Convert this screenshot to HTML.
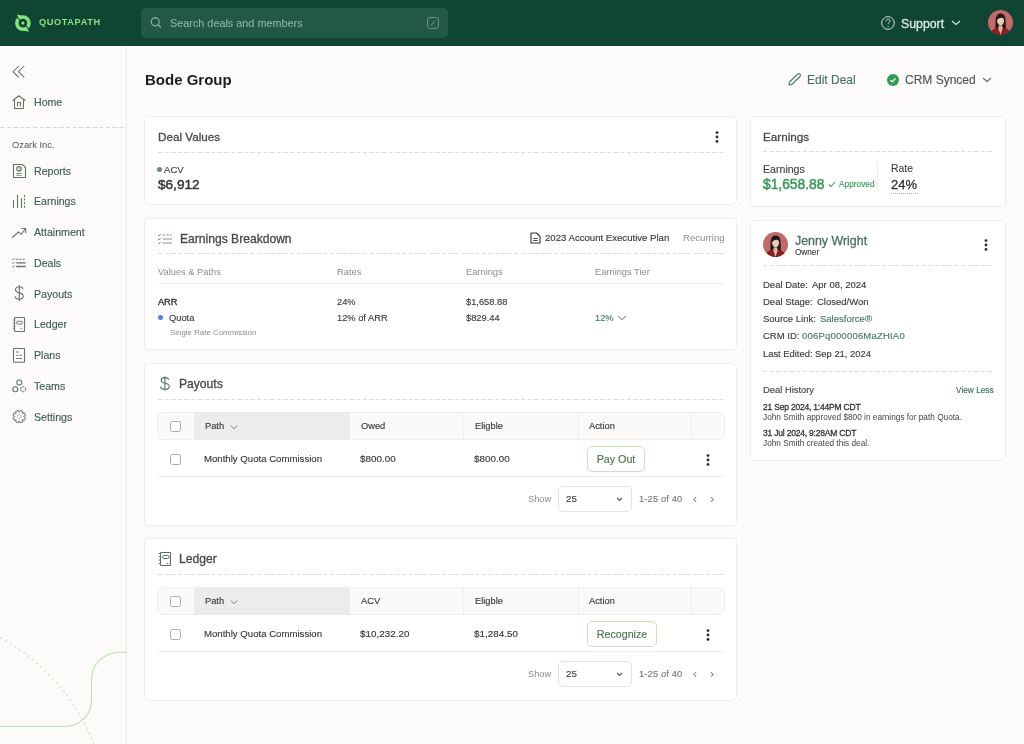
<!DOCTYPE html>
<html><head><meta charset="utf-8"><style>
html,body{margin:0;padding:0}
body{width:1024px;height:744px;position:relative;overflow:hidden;background:#fcfbf9;font-family:"Liberation Sans",sans-serif}
.t{position:absolute;white-space:nowrap;line-height:1;will-change:transform}
svg{display:block}
</style></head><body>
<div style="position:absolute;left:0px;top:0px;width:1024px;height:46px;background:#0f4532"></div>
<div style="position:absolute;left:141px;top:8px;width:307px;height:30px;background:#235845;border-radius:5px"></div>
<svg style="position:absolute;left:12px;top:12px" width="22" height="22" viewBox="0 0 22 22" fill="none"><circle cx="10.9" cy="11.1" r="6.1" stroke="#86e27a" stroke-width="3.5"/>
<circle cx="10.9" cy="11.1" r="1.6" fill="#92e884"/>
<path d="M3.5 3.2 L8.6 8.8 M18.3 19 L13.2 13.4" stroke="#0f4532" stroke-width="1.1"/>
<path d="M4.8 2.4 L9.5 3.4 L8.6 7.4 L6.2 5.2Z" fill="#86e27a"/>
<path d="M17 19.8 L12.3 18.8 L13.2 14.8 L15.6 17Z" fill="#86e27a"/></svg>
<div class="t" style="left:39.00px;top:18.21px;font-size:9.20px;color:#8ae27e;font-weight:700;letter-spacing:0.62px">QUOTAPATH</div>
<svg style="position:absolute;left:150px;top:17px" width="12" height="12" viewBox="0 0 12 12" fill="none"><circle cx="5.2" cy="4.8" r="4" stroke="#8fb8a6" stroke-width="1.15"/><path d="M8.1 7.7 L10.8 10.7" stroke="#8fb8a6" stroke-width="1.2"/></svg>
<div class="t" style="left:170.30px;top:17.80px;font-size:10.85px;color:#8ab19f;font-weight:400;-webkit-text-stroke:0.15px currentColor">Search deals and members</div>
<svg style="position:absolute;left:427px;top:17px" width="12" height="12" viewBox="0 0 12 12" fill="none"><rect x="0.6" y="0.6" width="10.8" height="10.8" rx="2.2" stroke="#6f9a87" stroke-width="1"/><path d="M4 8.5 L8 3.5" stroke="#6f9a87" stroke-width="1"/></svg>
<svg style="position:absolute;left:881px;top:16px" width="14" height="14" viewBox="0 0 14 14" fill="none"><circle cx="7" cy="7" r="6.3" stroke="#d9e6df" stroke-width="1"/><path d="M5 5.3 C5 3.9 6 3.2 7 3.2 C8.1 3.2 9 4 9 5.1 C9 6.4 7.1 6.6 7.1 8.2" stroke="#d9e6df" stroke-width="1"/><circle cx="7.1" cy="10.3" r="0.6" fill="#d9e6df"/></svg>
<div class="t" style="left:900.50px;top:18.19px;font-size:12.30px;color:#d8eadf;font-weight:400;-webkit-text-stroke:0.3px #d8eadf">Support</div>
<svg style="position:absolute;left:951px;top:20px" width="10" height="6" viewBox="0 0 10 6" fill="none"><path d="M1 1 L5 4.5 L9 1" stroke="#d9e6df" stroke-width="1.1"/></svg>
<svg style="position:absolute;left:988px;top:10px" width="25" height="25" viewBox="0 0 25 25" fill="none"><defs><clipPath id="c1"><circle cx="12.5" cy="12.5" r="12.5"/></clipPath></defs>
<g clip-path="url(#c1)"><rect width="25" height="25" fill="#c06a6c"/>
<path d="M7.3 25 L7.6 10.5 C7.8 5.5 10 3.6 12.6 3.6 C15.4 3.6 17.4 5.6 17.6 10.5 L18 25Z" fill="#251819"/>
<path d="M2 25 C3 20 6 18.5 9.5 18 L12.5 25Z M23 25 C22 20 19 18.5 15.5 18 L12.5 25Z" fill="#8f1d26"/>
<path d="M10.8 15.5 H14.2 L14.8 18.5 L12.5 25 L10.2 18.5Z" fill="#e3b3a0"/>
<ellipse cx="12.6" cy="10.8" rx="3.5" ry="4.7" fill="#eccbb8"/>
<path d="M9 10 C9.2 6.2 11 5 12.6 5 C14.5 5 16.2 6.4 16.3 9.5 C15 7.3 12 6.8 9 10Z" fill="#251819"/>
</g></svg>
<div style="position:absolute;left:126px;top:46px;width:1px;height:698px;background:#eeebe6"></div>
<div class="t" style="left:33.50px;top:97.12px;font-size:10.60px;color:#3d5f4f;font-weight:400;-webkit-text-stroke:0.15px currentColor">Home</div>
<div style="position:absolute;left:0px;top:127px;width:126px;height:1px;background:repeating-linear-gradient(90deg,#d9d7d2 0 4.4px,transparent 4.4px 6.6px)"></div>
<div class="t" style="left:12.00px;top:140.76px;font-size:9.30px;color:#555;font-weight:400;">Ozark Inc.</div>
<div class="t" style="left:33.50px;top:165.62px;font-size:10.60px;color:#3d5f4f;font-weight:400;-webkit-text-stroke:0.15px currentColor">Reports</div>
<div class="t" style="left:33.50px;top:196.37px;font-size:10.60px;color:#3d5f4f;font-weight:400;-webkit-text-stroke:0.15px currentColor">Earnings</div>
<div class="t" style="left:33.50px;top:227.12px;font-size:10.60px;color:#3d5f4f;font-weight:400;-webkit-text-stroke:0.15px currentColor">Attainment</div>
<div class="t" style="left:33.50px;top:257.87px;font-size:10.60px;color:#3d5f4f;font-weight:400;-webkit-text-stroke:0.15px currentColor">Deals</div>
<div class="t" style="left:33.50px;top:288.62px;font-size:10.60px;color:#3d5f4f;font-weight:400;-webkit-text-stroke:0.15px currentColor">Payouts</div>
<div class="t" style="left:33.50px;top:319.37px;font-size:10.60px;color:#3d5f4f;font-weight:400;-webkit-text-stroke:0.15px currentColor">Ledger</div>
<div class="t" style="left:33.50px;top:350.12px;font-size:10.60px;color:#3d5f4f;font-weight:400;-webkit-text-stroke:0.15px currentColor">Plans</div>
<div class="t" style="left:33.50px;top:380.87px;font-size:10.60px;color:#3d5f4f;font-weight:400;-webkit-text-stroke:0.15px currentColor">Teams</div>
<div class="t" style="left:33.50px;top:411.62px;font-size:10.60px;color:#3d5f4f;font-weight:400;-webkit-text-stroke:0.15px currentColor">Settings</div>
<svg style="position:absolute;left:0px;top:620px" width="127" height="124" viewBox="0 0 127 124" fill="none"><path d="M0 106.5 H64 C80 106.5 91.5 95 91.5 80 V60 C91.5 44 104 32.3 120 32.3 H127" stroke="#b8e0ad" stroke-width="1.1"/><path d="M0 17.6 A206.6 206.6 0 0 1 93.9 124" stroke="#d3e2cc" stroke-width="1.2" stroke-dasharray="2.5 3"/></svg>
<svg style="position:absolute;left:0;top:0" width="126" height="744" viewBox="0 0 126 744" fill="none" stroke="#627569" stroke-width="1.1">
<path d="M18.8 66 L13 71.7 L18.8 77.4 M24.3 66 L18.5 71.7 L24.3 77.4" stroke-width="1.05"/>
<path d="M12.6 100.8 L18.9 95.8 L25.3 100.8"/>
<path d="M14.5 99.3 V108.5 H23.5 V99.3"/>
<path d="M17.5 106.5 V102.5 H20.5 V106.5"/>
<path d="M13.5 164.5 H22.5 L25.5 167.5 V177.5 H13.5Z"/>
<circle cx="19" cy="168.8" r="2.3"/>
<path d="M19 166.5 V168.8 L20.4 170" stroke-width="0.8"/>
<path d="M16.3 173.5 H21.7 M16.3 175.3 H21.7" stroke-width="0.8"/>
<path d="M13.5 200.3 V208 M17.5 195 V208 M21.5 198.2 V208"/>
<path d="M24.5 195 V208" stroke-dasharray="2 1.6"/>
<path d="M12.3 237.5 L18.5 232 L21.3 234.3 L25.7 228.5"/>
<path d="M21.3 228.5 H25.7 V233"/>
<path d="M12.3 259.3 L13.1 260 L14.8 258.3 M12.3 262.9 L13.1 263.6 L14.8 261.9 M12.3 266.5 L13.1 267.2 L14.8 265.5" stroke-width="0.9"/>
<path d="M16.2 259.3 H25.7" stroke-dasharray="2 1.2"/>
<path d="M16.2 262.9 H25.7 M16.2 266.5 H25.7" stroke-width="1.3"/>
<path d="M22.8 289.3 C22.8 287.5 21.3 286.8 19.3 286.8 C17.2 286.8 15.5 287.9 15.5 289.8 C15.5 291.8 17.3 292.5 19.3 292.9 C21.5 293.3 23.2 294 23.2 296.2 C23.2 298.2 21.5 299.2 19.3 299.2 C17 299.2 15.3 298.2 15.1 296.3 M19.3 285 V301"/>
<rect x="14.5" y="317.5" width="10" height="14" rx="0.8"/>
<rect x="16.8" y="321.3" width="5.4" height="2.8" rx="0.6" stroke-width="0.9"/>
<path d="M12.8 320 H15.2 M12.8 323 H15.2 M12.8 326 H15.2 M12.8 329 H15.2 M20.4 328.8 H22.4" stroke-width="0.8"/>
<rect x="13.5" y="348.5" width="11" height="13.8" rx="0.6"/>
<path d="M16 352 H19 M16 355.3 H18.3 M19.5 355.3 H22 M16 358.5 H22" stroke-width="0.9"/>
<circle cx="19.3" cy="382.5" r="2.5"/>
<circle cx="15.3" cy="389.2" r="2.5"/>
<circle cx="23.1" cy="389.2" r="2.5" stroke-dasharray="1.7 1"/>
<path d="M23.74 416.88 L25.55 417.70 L24.49 420.28 L22.63 419.58 L22.23 419.98 L22.93 421.84 L20.35 422.90 L19.53 421.09 L18.97 421.09 L18.15 422.90 L15.57 421.84 L16.27 419.98 L15.87 419.58 L14.01 420.28 L12.95 417.70 L14.76 416.88 L14.76 416.32 L12.95 415.50 L14.01 412.92 L15.87 413.62 L16.27 413.22 L15.57 411.36 L18.15 410.30 L18.97 412.11 L19.53 412.11 L20.35 410.30 L22.93 411.36 L22.23 413.22 L22.63 413.62 L24.49 412.92 L25.55 415.50 L23.74 416.32Z" stroke-linejoin="round" stroke-width="1"/>
<circle cx="19.25" cy="416.6" r="1.9" stroke-width="0.8" stroke-dasharray="1 0.9"/>
</svg>
<div class="t" style="left:145.00px;top:71.87px;font-size:15.00px;color:#1d1d1d;font-weight:700;">Bode Group</div>
<svg style="position:absolute;left:787px;top:72px" width="15" height="15" viewBox="0 0 15 15" fill="none"><path d="M2 13 L2.6 10 L10.5 2.1 C11.2 1.4 12.2 1.4 12.9 2.1 C13.6 2.8 13.6 3.8 12.9 4.5 L5 12.4Z" stroke="#4f7a66" stroke-width="1.2" stroke-linejoin="round"/></svg>
<div class="t" style="left:807.00px;top:73.94px;font-size:12.00px;color:#4c7261;font-weight:400;-webkit-text-stroke:0.15px currentColor">Edit Deal</div>
<svg style="position:absolute;left:887px;top:74px" width="12" height="12" viewBox="0 0 12 12" fill="none"><circle cx="6" cy="6" r="6" fill="#2f9d55"/><path d="M3.4 6.1 L5.2 7.8 L8.6 4.4" stroke="#fff" stroke-width="1.3"/></svg>
<div class="t" style="left:905.00px;top:73.94px;font-size:12.00px;color:#555;font-weight:400;-webkit-text-stroke:0.15px currentColor">CRM Synced</div>
<svg style="position:absolute;left:982px;top:77px" width="10" height="6" viewBox="0 0 10 6" fill="none"><path d="M1 1 L5 4.5 L9 1" stroke="#666" stroke-width="1.1"/></svg>
<div style="position:absolute;left:144px;top:116px;width:593px;height:89px;background:#fff;border:1px solid #efedea;border-radius:5px;box-sizing:border-box"></div>
<div class="t" style="left:157.60px;top:130.98px;font-size:11.70px;color:#484848;font-weight:400;-webkit-text-stroke:0.3px currentColor">Deal Values</div>
<svg style="position:absolute;left:713.80px;top:130.00px" width="6" height="14" viewBox="0 0 6 14"><circle cx="3" cy="2.55" r="1.4" fill="#2a2a2a"/><circle cx="3" cy="7" r="1.4" fill="#2a2a2a"/><circle cx="3" cy="11.45" r="1.4" fill="#2a2a2a"/></svg>
<div style="position:absolute;left:158px;top:152px;width:567px;height:1px;background:repeating-linear-gradient(90deg,#dcdcd8 0 4.4px,transparent 4.4px 6.6px)"></div>
<div style="position:absolute;left:157.2px;top:167.4px;width:5px;height:5px;border-radius:50%;background:#5c9b5f"></div>
<div class="t" style="left:164.00px;top:165.31px;font-size:9.60px;color:#444;font-weight:400;-webkit-text-stroke:0.15px currentColor">ACV</div>
<div class="t" style="left:157.80px;top:178.06px;font-size:13.60px;color:#363636;font-weight:400;-webkit-text-stroke:0.45px #363636">$6,912</div>
<div style="position:absolute;left:144px;top:218px;width:593px;height:132px;background:#fff;border:1px solid #efedea;border-radius:5px;box-sizing:border-box"></div>
<svg style="position:absolute;left:157px;top:232px" width="16" height="13" viewBox="0 0 16 13" fill="none"><path d="M5.5 3 H15" stroke="#7f9c8e" stroke-width="1.1" stroke-dasharray="2.6 1.2"/><path d="M5.5 7 H15 M5.5 11 H15" stroke="#7f9c8e" stroke-width="1.1"/><path d="M1 3 L1.9 3.9 L3.6 2 M1 7 L1.9 7.9 L3.6 6 M1 11 L1.9 11.9 L3.6 10" stroke="#5f7a6c" stroke-width="0.9"/></svg>
<div class="t" style="left:179.80px;top:232.99px;font-size:12.10px;color:#484848;font-weight:400;-webkit-text-stroke:0.3px currentColor">Earnings Breakdown</div>
<svg style="position:absolute;left:530px;top:232px" width="11" height="12" viewBox="0 0 11 12" fill="none"><path d="M1 1 H6.5 L10 4.5 V11 H1Z" stroke="#333" stroke-width="1.1" stroke-linejoin="round"/><path d="M3.3 6.5 H7.7 M3.3 8.5 H7.7" stroke="#333" stroke-width="0.9"/></svg>
<div class="t" style="left:544.70px;top:233.11px;font-size:9.60px;color:#3a3a3a;font-weight:400;-webkit-text-stroke:0.15px currentColor">2023 Account Executive Plan</div>
<div class="t" style="left:682.80px;top:233.11px;font-size:9.60px;color:#8a8a8a;font-weight:400;">Recurring</div>
<div style="position:absolute;left:158px;top:253px;width:567px;height:1px;background:repeating-linear-gradient(90deg,#dcdcd8 0 4.4px,transparent 4.4px 6.6px)"></div>
<div class="t" style="left:158.00px;top:267.86px;font-size:9.30px;color:#8c8c8c;font-weight:400;">Values &amp; Paths</div>
<div class="t" style="left:337.00px;top:267.86px;font-size:9.30px;color:#8c8c8c;font-weight:400;">Rates</div>
<div class="t" style="left:466.00px;top:267.86px;font-size:9.30px;color:#8c8c8c;font-weight:400;">Earnings</div>
<div class="t" style="left:595.20px;top:267.86px;font-size:9.30px;color:#8c8c8c;font-weight:400;">Earnings Tier</div>
<div style="position:absolute;left:158px;top:283px;width:567px;height:1px;background:#f1f0ed"></div>
<div class="t" style="left:158.00px;top:297.66px;font-size:9.30px;color:#333;font-weight:400;-webkit-text-stroke:0.3px #333;letter-spacing:-0.1px">ARR</div>
<div class="t" style="left:337.00px;top:297.66px;font-size:9.30px;color:#3d3d3d;font-weight:400;-webkit-text-stroke:0.15px currentColor">24%</div>
<div class="t" style="left:466.00px;top:297.66px;font-size:9.30px;color:#3d3d3d;font-weight:400;-webkit-text-stroke:0.15px currentColor">$1,658.88</div>
<div style="position:absolute;left:157.6px;top:315px;width:5px;height:5px;border-radius:50%;background:#5a7fd6"></div>
<div class="t" style="left:169.00px;top:313.66px;font-size:9.30px;color:#3d3d3d;font-weight:400;-webkit-text-stroke:0.15px currentColor">Quota</div>
<div class="t" style="left:337.00px;top:313.66px;font-size:9.30px;color:#3d3d3d;font-weight:400;-webkit-text-stroke:0.15px currentColor">12% of ARR</div>
<div class="t" style="left:466.00px;top:313.66px;font-size:9.30px;color:#3d3d3d;font-weight:400;-webkit-text-stroke:0.15px currentColor">$829.44</div>
<div class="t" style="left:595.20px;top:313.66px;font-size:9.30px;color:#4f7a66;font-weight:400;-webkit-text-stroke:0.15px currentColor">12%</div>
<svg style="position:absolute;left:617px;top:315px" width="10" height="6" viewBox="0 0 10 6" fill="none"><path d="M1 1 L5 4.5 L9 1" stroke="#666" stroke-width="1"/></svg>
<div class="t" style="left:170.40px;top:328.94px;font-size:7.90px;color:#8c8c8c;font-weight:400;">Single Rate Commission</div>
<div style="position:absolute;left:144px;top:363px;width:593px;height:163px;background:#fff;border:1px solid #efedea;border-radius:5px;box-sizing:border-box"></div>
<svg style="position:absolute;left:157px;top:375px" width="16" height="17" viewBox="0 0 16 17" fill="none"><path d="M11.8 4.8 C11.6 3.3 10.2 2.6 8 2.6 C5.6 2.6 4.2 3.7 4.2 5.3 C4.2 7.3 6.2 7.8 8 8.2 C10.2 8.6 12.3 9.3 12.3 11.5 C12.3 13.4 10.5 14.3 8 14.3 C5.5 14.3 3.8 13.3 3.6 11.6 M7.9 1.3 V15.6" stroke="#557063" stroke-width="1.1"/></svg>
<div class="t" style="left:179.40px;top:378.09px;font-size:12.10px;color:#484848;font-weight:400;-webkit-text-stroke:0.3px currentColor">Payouts</div>
<div style="position:absolute;left:158px;top:399px;width:567px;height:1px;background:repeating-linear-gradient(90deg,#dcdcd8 0 4.4px,transparent 4.4px 6.6px)"></div>
<div style="position:absolute;left:157px;top:412px;width:568px;height:28px;background:#fbfaf9;border:1px solid #f1efec;border-radius:6px;box-sizing:border-box"></div>
<div style="position:absolute;left:194px;top:412px;width:156px;height:28px;background:#ececeb"></div>
<div style="position:absolute;left:463px;top:412px;width:1px;height:28px;background:#f0eeeb"></div>
<div style="position:absolute;left:577.5px;top:412px;width:1px;height:28px;background:#f0eeeb"></div>
<div style="position:absolute;left:690.5px;top:412px;width:1px;height:28px;background:#f0eeeb"></div>
<div style="position:absolute;left:170px;top:421px;width:11px;height:11px;border:1px solid #ababab;border-radius:2.5px;box-sizing:border-box;background:#fff"></div>
<div class="t" style="left:204.60px;top:422.46px;font-size:9.30px;color:#3a3a3a;font-weight:400;-webkit-text-stroke:0.15px currentColor">Path</div>
<svg style="position:absolute;left:230px;top:425px" width="8" height="5" viewBox="0 0 8 5" fill="none"><path d="M0.8 0.8 L4 3.6 L7.2 0.8" stroke="#777" stroke-width="0.9"/></svg>
<div class="t" style="left:361.00px;top:422.46px;font-size:9.30px;color:#3a3a3a;font-weight:400;-webkit-text-stroke:0.15px currentColor">Owed</div>
<div class="t" style="left:474.70px;top:422.46px;font-size:9.30px;color:#3a3a3a;font-weight:400;-webkit-text-stroke:0.15px currentColor">Eligble</div>
<div class="t" style="left:588.50px;top:422.46px;font-size:9.30px;color:#3a3a3a;font-weight:400;-webkit-text-stroke:0.15px currentColor">Action</div>
<div style="position:absolute;left:170px;top:454px;width:11px;height:11px;border:1px solid #ababab;border-radius:2.5px;box-sizing:border-box;background:#fff"></div>
<div class="t" style="left:203.50px;top:454.10px;font-size:9.62px;color:#3a3a3a;font-weight:400;-webkit-text-stroke:0.15px currentColor">Monthly Quota Commission</div>
<div class="t" style="left:360.00px;top:453.91px;font-size:9.80px;color:#3a3a3a;font-weight:400;letter-spacing:0.05px;-webkit-text-stroke:0.15px currentColor">$800.00</div>
<div class="t" style="left:474.00px;top:453.91px;font-size:9.80px;color:#3a3a3a;font-weight:400;letter-spacing:0.05px;-webkit-text-stroke:0.15px currentColor">$800.00</div>
<div style="position:absolute;left:587px;top:446px;width:57.5px;height:25.5px;border:1px solid #c5e6b9;border-radius:5px;box-sizing:border-box;background:#fff"></div>
<div class="t" style="left:615.75px;top:453.77px;font-size:10.70px;color:#4a7350;font-weight:400;transform:translateX(-50%);-webkit-text-stroke:0.15px currentColor">Pay Out</div>
<svg style="position:absolute;left:705.00px;top:452.50px" width="6" height="14" viewBox="0 0 6 14"><circle cx="3" cy="2.55" r="1.4" fill="#2a2a2a"/><circle cx="3" cy="7" r="1.4" fill="#2a2a2a"/><circle cx="3" cy="11.45" r="1.4" fill="#2a2a2a"/></svg>
<div style="position:absolute;left:157px;top:476px;width:568px;height:1px;background:#efeeeb"></div>
<div class="t" style="left:527.80px;top:495.46px;font-size:9.30px;color:#8c8c8c;font-weight:400;">Show</div>
<div style="position:absolute;left:558px;top:486px;width:74px;height:25.5px;border:1px solid #e4e2de;border-radius:5px;box-sizing:border-box;background:#fff"></div>
<div class="t" style="left:566.20px;top:494.21px;font-size:9.80px;color:#444;font-weight:400;-webkit-text-stroke:0.15px currentColor">25</div>
<svg style="position:absolute;left:616px;top:497px" width="7" height="5" viewBox="0 0 7 5" fill="none"><path d="M1 1 L3.5 3.5 L6 1" stroke="#555" stroke-width="1.1"/></svg>
<div class="t" style="left:639.00px;top:495.46px;font-size:9.30px;color:#7a7a7a;font-weight:400;letter-spacing:0.15px;-webkit-text-stroke:0.15px currentColor">1-25 of 40</div>
<svg style="position:absolute;left:692px;top:495.5px" width="6" height="7" viewBox="0 0 6 7" fill="none"><path d="M4 1.2 L1.9 3.5 L4 5.8" stroke="#555" stroke-width="1"/></svg>
<svg style="position:absolute;left:709px;top:495.5px" width="6" height="7" viewBox="0 0 6 7" fill="none"><path d="M2 1.2 L4.1 3.5 L2 5.8" stroke="#555" stroke-width="1"/></svg>
<div style="position:absolute;left:144px;top:538px;width:593px;height:163px;background:#fff;border:1px solid #efedea;border-radius:5px;box-sizing:border-box"></div>
<svg style="position:absolute;left:157px;top:550px" width="16" height="18" viewBox="0 0 16 18" fill="none" stroke="#587064"><rect x="3.5" y="2.5" width="10" height="13" rx="0.6" stroke-width="1.1"/><rect x="5.6" y="5.5" width="6.3" height="3" rx="1.2" stroke-width="1"/><path d="M1.6 3.5 H3.5 M1.6 6.5 H3.5 M1.6 10 H3.5 M1.6 13.5 H3.5 M9.6 13.6 H11.4" stroke-width="0.9"/></svg>
<div class="t" style="left:179.40px;top:553.09px;font-size:12.10px;color:#484848;font-weight:400;-webkit-text-stroke:0.3px currentColor">Ledger</div>
<div style="position:absolute;left:158px;top:574px;width:567px;height:1px;background:repeating-linear-gradient(90deg,#dcdcd8 0 4.4px,transparent 4.4px 6.6px)"></div>
<div style="position:absolute;left:157px;top:587px;width:568px;height:28px;background:#fbfaf9;border:1px solid #f1efec;border-radius:6px;box-sizing:border-box"></div>
<div style="position:absolute;left:194px;top:587px;width:156px;height:28px;background:#ececeb"></div>
<div style="position:absolute;left:463px;top:587px;width:1px;height:28px;background:#f0eeeb"></div>
<div style="position:absolute;left:577.5px;top:587px;width:1px;height:28px;background:#f0eeeb"></div>
<div style="position:absolute;left:690.5px;top:587px;width:1px;height:28px;background:#f0eeeb"></div>
<div style="position:absolute;left:170px;top:596px;width:11px;height:11px;border:1px solid #ababab;border-radius:2.5px;box-sizing:border-box;background:#fff"></div>
<div class="t" style="left:204.60px;top:597.46px;font-size:9.30px;color:#3a3a3a;font-weight:400;-webkit-text-stroke:0.15px currentColor">Path</div>
<svg style="position:absolute;left:230px;top:600px" width="8" height="5" viewBox="0 0 8 5" fill="none"><path d="M0.8 0.8 L4 3.6 L7.2 0.8" stroke="#777" stroke-width="0.9"/></svg>
<div class="t" style="left:361.00px;top:597.46px;font-size:9.30px;color:#3a3a3a;font-weight:400;-webkit-text-stroke:0.15px currentColor">ACV</div>
<div class="t" style="left:474.70px;top:597.46px;font-size:9.30px;color:#3a3a3a;font-weight:400;-webkit-text-stroke:0.15px currentColor">Eligble</div>
<div class="t" style="left:588.50px;top:597.46px;font-size:9.30px;color:#3a3a3a;font-weight:400;-webkit-text-stroke:0.15px currentColor">Action</div>
<div style="position:absolute;left:170px;top:629px;width:11px;height:11px;border:1px solid #ababab;border-radius:2.5px;box-sizing:border-box;background:#fff"></div>
<div class="t" style="left:203.50px;top:629.10px;font-size:9.62px;color:#3a3a3a;font-weight:400;-webkit-text-stroke:0.15px currentColor">Monthly Quota Commission</div>
<div class="t" style="left:360.00px;top:628.91px;font-size:9.80px;color:#3a3a3a;font-weight:400;letter-spacing:0.05px;-webkit-text-stroke:0.15px currentColor">$10,232.20</div>
<div class="t" style="left:474.00px;top:628.91px;font-size:9.80px;color:#3a3a3a;font-weight:400;letter-spacing:0.05px;-webkit-text-stroke:0.15px currentColor">$1,284.50</div>
<div style="position:absolute;left:587px;top:621px;width:70px;height:25.5px;border:1px solid #c5e6b9;border-radius:5px;box-sizing:border-box;background:#fff"></div>
<div class="t" style="left:622.00px;top:628.77px;font-size:10.70px;color:#4a7350;font-weight:400;transform:translateX(-50%);-webkit-text-stroke:0.15px currentColor">Recognize</div>
<svg style="position:absolute;left:705.00px;top:627.50px" width="6" height="14" viewBox="0 0 6 14"><circle cx="3" cy="2.55" r="1.4" fill="#2a2a2a"/><circle cx="3" cy="7" r="1.4" fill="#2a2a2a"/><circle cx="3" cy="11.45" r="1.4" fill="#2a2a2a"/></svg>
<div style="position:absolute;left:157px;top:651px;width:568px;height:1px;background:#efeeeb"></div>
<div class="t" style="left:527.80px;top:670.46px;font-size:9.30px;color:#8c8c8c;font-weight:400;">Show</div>
<div style="position:absolute;left:558px;top:661px;width:74px;height:25.5px;border:1px solid #e4e2de;border-radius:5px;box-sizing:border-box;background:#fff"></div>
<div class="t" style="left:566.20px;top:669.21px;font-size:9.80px;color:#444;font-weight:400;-webkit-text-stroke:0.15px currentColor">25</div>
<svg style="position:absolute;left:616px;top:672px" width="7" height="5" viewBox="0 0 7 5" fill="none"><path d="M1 1 L3.5 3.5 L6 1" stroke="#555" stroke-width="1.1"/></svg>
<div class="t" style="left:639.00px;top:670.46px;font-size:9.30px;color:#7a7a7a;font-weight:400;letter-spacing:0.15px;-webkit-text-stroke:0.15px currentColor">1-25 of 40</div>
<svg style="position:absolute;left:692px;top:670.5px" width="6" height="7" viewBox="0 0 6 7" fill="none"><path d="M4 1.2 L1.9 3.5 L4 5.8" stroke="#555" stroke-width="1"/></svg>
<svg style="position:absolute;left:709px;top:670.5px" width="6" height="7" viewBox="0 0 6 7" fill="none"><path d="M2 1.2 L4.1 3.5 L2 5.8" stroke="#555" stroke-width="1"/></svg>
<div style="position:absolute;left:750px;top:116px;width:256px;height:91px;background:#fff;border:1px solid #efedea;border-radius:5px;box-sizing:border-box"></div>
<div class="t" style="left:763.00px;top:130.98px;font-size:11.70px;color:#484848;font-weight:400;-webkit-text-stroke:0.3px currentColor">Earnings</div>
<div style="position:absolute;left:763px;top:151px;width:231px;height:1px;background:repeating-linear-gradient(90deg,#dcdcd8 0 4.4px,transparent 4.4px 6.6px)"></div>
<div class="t" style="left:763.00px;top:163.72px;font-size:10.60px;color:#444;font-weight:400;-webkit-text-stroke:0.15px currentColor">Earnings</div>
<div class="t" style="left:763.00px;top:177.56px;font-size:13.80px;color:#3a9a5b;font-weight:400;-webkit-text-stroke:0.5px #3a9a5b">$1,658.88</div>
<svg style="position:absolute;left:828px;top:180.5px" width="8" height="7" viewBox="0 0 8 7" fill="none"><path d="M1 3.5 L3 5.5 L7 1" stroke="#3a9a55" stroke-width="1.1"/></svg>
<div class="t" style="left:839.00px;top:180.15px;font-size:8.30px;color:#3a9a5b;font-weight:400;-webkit-text-stroke:0.15px currentColor">Approved</div>
<div style="position:absolute;left:877px;top:161px;width:1px;height:30px;background:#efeeeb"></div>
<div class="t" style="left:891.20px;top:163.82px;font-size:10.40px;color:#444;font-weight:400;-webkit-text-stroke:0.15px currentColor">Rate</div>
<div class="t" style="left:891.00px;top:177.75px;font-size:13.00px;color:#333;font-weight:400;-webkit-text-stroke:0.3px currentColor">24%</div>
<div style="position:absolute;left:891px;top:193px;width:28px;height:1px;background:repeating-linear-gradient(90deg,#aaa 0 1px,transparent 1px 2px)"></div>
<div style="position:absolute;left:750px;top:220px;width:256px;height:241px;background:#fff;border:1px solid #efedea;border-radius:5px;box-sizing:border-box"></div>
<svg style="position:absolute;left:763px;top:232px" width="25" height="25" viewBox="0 0 25 25" fill="none"><defs><clipPath id="c2"><circle cx="12.5" cy="12.5" r="12.5"/></clipPath></defs>
<g clip-path="url(#c2)"><rect width="25" height="25" fill="#c06a6c"/>
<path d="M7.3 25 L7.6 10.5 C7.8 5.5 10 3.6 12.6 3.6 C15.4 3.6 17.4 5.6 17.6 10.5 L18 25Z" fill="#251819"/>
<path d="M2 25 C3 20 6 18.5 9.5 18 L12.5 25Z M23 25 C22 20 19 18.5 15.5 18 L12.5 25Z" fill="#8f1d26"/>
<path d="M10.8 15.5 H14.2 L14.8 18.5 L12.5 25 L10.2 18.5Z" fill="#e3b3a0"/>
<ellipse cx="12.6" cy="10.8" rx="3.5" ry="4.7" fill="#eccbb8"/>
<path d="M9 10 C9.2 6.2 11 5 12.6 5 C14.5 5 16.2 6.4 16.3 9.5 C15 7.3 12 6.8 9 10Z" fill="#251819"/>
</g></svg>
<div class="t" style="left:795.00px;top:234.94px;font-size:12.40px;color:#4c7261;font-weight:400;-webkit-text-stroke:0.3px currentColor">Jenny Wright</div>
<div class="t" style="left:795.00px;top:249.19px;font-size:8.20px;color:#444;font-weight:400;-webkit-text-stroke:0.15px currentColor">Owner</div>
<svg style="position:absolute;left:982.50px;top:238.00px" width="6" height="14" viewBox="0 0 6 14"><circle cx="3" cy="2.55" r="1.4" fill="#2a2a2a"/><circle cx="3" cy="7" r="1.4" fill="#2a2a2a"/><circle cx="3" cy="11.45" r="1.4" fill="#2a2a2a"/></svg>
<div style="position:absolute;left:763px;top:265px;width:231px;height:1px;background:repeating-linear-gradient(90deg,#dcdcd8 0 4.4px,transparent 4.4px 6.6px)"></div>
<div class="t" style="left:763.00px;top:279.56px;font-size:9.50px;color:#3c3c3c;font-weight:400;-webkit-text-stroke:0.15px currentColor">Deal Date:</div>
<div class="t" style="left:811.80px;top:279.56px;font-size:9.50px;color:#3c3c3c;font-weight:400;-webkit-text-stroke:0.15px currentColor">Apr 08, 2024</div>
<div class="t" style="left:763.00px;top:297.06px;font-size:9.50px;color:#3c3c3c;font-weight:400;-webkit-text-stroke:0.15px currentColor">Deal Stage:</div>
<div class="t" style="left:816.70px;top:297.06px;font-size:9.50px;color:#3c3c3c;font-weight:400;-webkit-text-stroke:0.15px currentColor">Closed/Won</div>
<div class="t" style="left:763.00px;top:314.26px;font-size:9.50px;color:#3c3c3c;font-weight:400;-webkit-text-stroke:0.15px currentColor">Source Link:</div>
<div class="t" style="left:820.40px;top:314.26px;font-size:9.50px;color:#4b7a63;font-weight:400;-webkit-text-stroke:0.15px currentColor">Salesforce®</div>
<div class="t" style="left:763.00px;top:330.96px;font-size:9.50px;color:#3c3c3c;font-weight:400;-webkit-text-stroke:0.15px currentColor">CRM ID:</div>
<div class="t" style="left:801.60px;top:330.96px;font-size:9.50px;color:#4b7a63;font-weight:400;letter-spacing:0.2px;-webkit-text-stroke:0.15px currentColor">006Pq000006MaZHIA0</div>
<div class="t" style="left:763.00px;top:348.71px;font-size:9.40px;color:#3c3c3c;font-weight:400;-webkit-text-stroke:0.15px currentColor">Last Edited: Sep 21, 2024</div>
<div style="position:absolute;left:763px;top:371px;width:231px;height:1px;background:repeating-linear-gradient(90deg,#dcdcd8 0 4.4px,transparent 4.4px 6.6px)"></div>
<div class="t" style="left:763.00px;top:385.01px;font-size:9.40px;color:#484848;font-weight:400;-webkit-text-stroke:0.15px currentColor">Deal History</div>
<div class="t" style="left:956.20px;top:385.55px;font-size:8.30px;color:#3f7356;font-weight:400;-webkit-text-stroke:0.15px currentColor">View Less</div>
<div class="t" style="left:763.00px;top:402.75px;font-size:8.50px;color:#333;font-weight:400;-webkit-text-stroke:0.28px #333;letter-spacing:-0.2px">21 Sep 2024, 1:44PM CDT</div>
<div class="t" style="left:763.00px;top:413.66px;font-size:8.28px;color:#444;font-weight:400;">John Smith approved $800 in earnings for path Quota.</div>
<div class="t" style="left:763.00px;top:429.45px;font-size:8.50px;color:#333;font-weight:400;-webkit-text-stroke:0.28px #333;letter-spacing:-0.2px">31 Jul 2024, 9:28AM CDT</div>
<div class="t" style="left:763.00px;top:440.47px;font-size:8.25px;color:#444;font-weight:400;">John Smith created this deal.</div>
</body></html>
